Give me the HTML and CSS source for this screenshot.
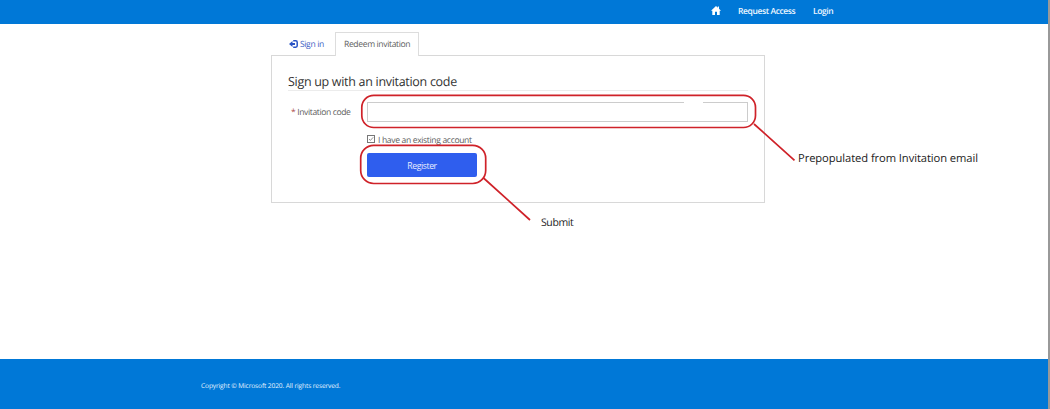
FILE: index.html
```html
<!DOCTYPE html>
<html lang="en">
<head>
<meta charset="utf-8">
<title>Redeem invitation</title>
<link rel="stylesheet" href="styles.css">
</head>
<body>
<div class="page">
  <header class="navbar">
    <svg class="home" viewBox="0 0 10 9"><path d="M5 0 6.8 1.7V.6H8V2.8L10 4.8H8.7V9H6V5.8H4V9H1.3V4.8H0Z"/></svg>
    <a class="nav-request">Request Access</a>
    <a class="nav-login">Login</a>
  </header>
  <main class="content">
    <nav class="tabs">
      <a class="tab tab-signin">
        <svg class="signin-icon" viewBox="0 0 9 8"><path d="M0 4 3.5 .9V3H6V5H3.5V7.1Z"/><path d="M4.2 .8H6.8Q8.2 .8 8.2 2.2V5.8Q8.2 7.2 6.8 7.2H4.2" class="door"/></svg>
        <span class="signin-label">Sign in</span>
      </a>
      <a class="tab tab-active"><span class="redeem-label">Redeem invitation</span></a>
    </nav>
    <section class="panel">
      <h1 class="title"><span>Sign up with an invitation code</span></h1>
      <div class="field">
        <label class="field-label"><b class="star">*</b> <span class="code-label">Invitation code</span></label>
        <div class="input"></div>
      </div>
      <div class="actions">
        <label class="check">
          <svg class="box" viewBox="0 0 8 8"><rect x=".5" y=".5" width="7" height="7"/><path d="M2 4 3.4 5.4 6.2 2.3"/></svg>
          <span class="check-label">I have an existing account</span>
        </label>
        <button class="register"><span>Register</span></button>
      </div>
    </section>
  </main>
  <footer class="footer"><span class="copyright">Copyright © Microsoft 2020. All rights reserved.</span></footer>
  <svg class="marks" viewBox="0 0 1050 409">
    <path class="fade" d="M684 102.5H703"/>
    <rect x="361.8" y="95.3" width="393.7" height="32.2" rx="12"/>
    <rect x="360.7" y="145.3" width="125" height="38.2" rx="13"/>
    <path d="M754 124 794.5 160.3M483.5 178 530 220"/>
  </svg>
  <span class="note note-email">Prepopulated from Invitation email</span>
  <span class="note note-submit">Submit</span>
</div>
</body>
</html>
```
FILE: styles.css
```css
* { box-sizing: border-box; }
body {
  margin: 0;
  background: #fff;
  font-family: "Open Sans", "Noto Sans", sans-serif;
  color: #606060;
  text-rendering: geometricPrecision;
}
span, a { white-space: nowrap; }
.page {
  position: relative;
  display: flex;
  flex-direction: column;
  width: 1050px;
  height: 409px;
  border-right: 2px solid #999;
  overflow: hidden;
}
.navbar {
  height: 24px;
  padding: 0 214px 2px 0;
  display: flex;
  align-items: center;
  justify-content: flex-end;
  background: #0078d7;
  color: #eef7ff;
  font-size: 8.5px;
  font-weight: 600;
  letter-spacing: -.4px;
}
.home { width: 10px; height: 9px; margin: -1px 17px 0 0; fill: #fff; }
.nav-request { width: 58px; margin-right: 17px; }
.nav-login { width: 21px; }
.content { flex: 1; padding: 8px 0 0 271px; }
.tabs { display: flex; height: 23px; font-size: 8.6px; letter-spacing: -.38px; }
.tab { display: flex; align-items: center; height: 24px; }
.tab-signin { width: 64px; padding-left: 18px; color: #3f62c4; }
.signin-icon { width: 9px; height: 8px; margin-right: 2px; fill: #2853c5; }
.door { fill: none; stroke: #2853c5; stroke-width: 1.5; }
.tab-active {
  position: relative;
  width: 84px;
  padding: 0 0 1px 8px;
  background: #fff;
  border: 1px solid #ddd;
  border-bottom: 0;
}
.panel {
  width: 494px;
  height: 148px;
  padding: 15px 16px 0;
  border: 1px solid #d8d8d8;
}
.title {
  margin: 0;
  height: 20px;
  line-height: 21px;
  border-bottom: 1px solid #ececec;
  font-size: 12.5px;
  font-weight: 400;
  letter-spacing: -.3px;
  color: #333;
}
.field {
  display: flex;
  align-items: center;
  margin-top: 11px;
  font-size: 8.6px;
  letter-spacing: -.4px;
}
.field-label { width: 79px; padding-left: 3px; }
.star { color: #a94442; font-weight: 400; }
.input { width: 381px; height: 20px; border: 1px solid #ccc; }
.actions { margin: 11px 0 0 79px; }
.check { display: flex; align-items: center; height: 12px; font-size: 8.6px; letter-spacing: -.36px; }
.check-label { padding-top: 1px; }
.box { width: 8px; height: 8px; margin-right: 3px; fill: #fff; stroke: #777; }
.box path { fill: none; stroke-width: .8; }
.register {
  display: block;
  width: 110px;
  height: 24px;
  margin-top: 8px;
  padding: 1px 0 0;
  border: 0;
  border-radius: 2px;
  background: #2f5eee;
  color: #e8eeff;
  font: 8.6px "Open Sans", sans-serif;
  letter-spacing: -.38px;
}
.footer {
  display: flex;
  align-items: center;
  height: 50px;
  padding: 2px 0 0 201px;
  background: #0078d7;
  color: #e8f4ff;
  font-size: 6.6px;
  letter-spacing: -.12px;
}
.marks {
  position: absolute;
  left: 0;
  top: 0;
  width: 1050px;
  height: 409px;
  fill: none;
  stroke: #cf2229;
  stroke-width: 1.7;
}
.fade { stroke: #fff; stroke-width: 1; }
.note {
  position: absolute;
  font-size: 11.2px;
  letter-spacing: -.08px;
  line-height: 16px;
  color: #1c1c1c;
}
.note-email { left: 798px; top: 151px; }
.note-submit { left: 541px; top: 215px; font-size: 10.5px; letter-spacing: -.4px; }
```
